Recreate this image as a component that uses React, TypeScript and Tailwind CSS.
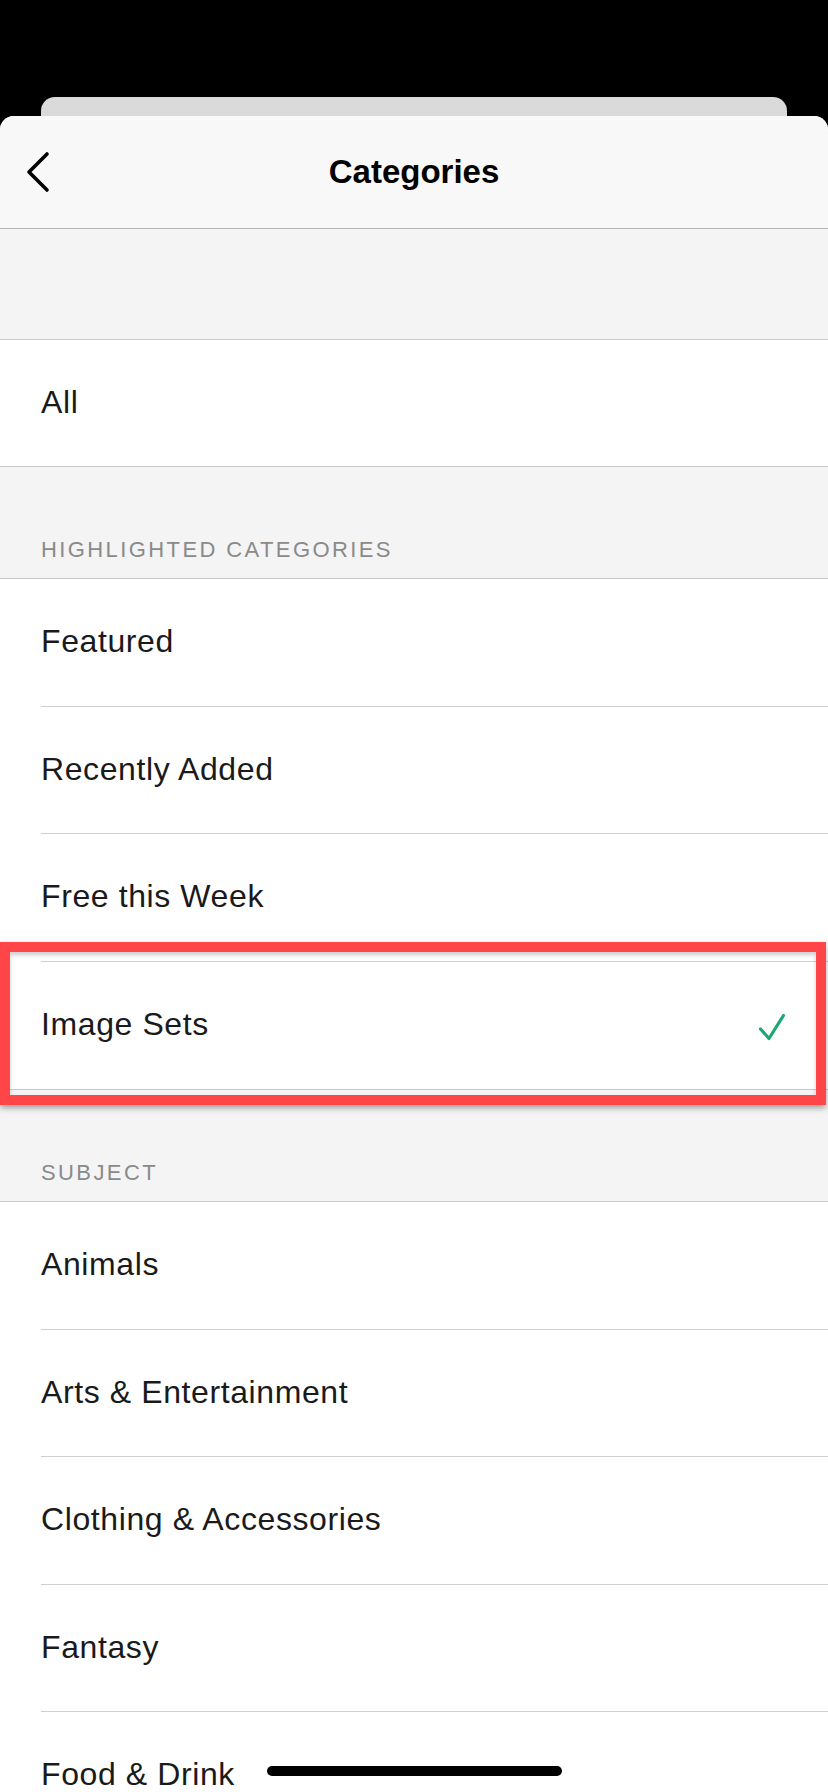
import React from 'react'

const highlighted = ['Featured', 'Recently Added', 'Free this Week', 'Image Sets']
const subjects = ['Animals', 'Arts & Entertainment', 'Clothing & Accessories', 'Fantasy', 'Food & Drink']

function Check() {
  return (
    <svg width="30" height="30" viewBox="0 0 30 30" fill="none" className="mt-[6px]">
      <path
        d="M4.5 17 L13 26.5 L27.5 3.5"
        stroke="#1da873"
        strokeWidth="3.2"
        strokeLinecap="round"
        strokeLinejoin="round"
      />
    </svg>
  )
}

function SectionLabel({ children }: { children: React.ReactNode }) {
  return (
    <div className="h-[112px] bg-[#f4f4f4] border-b border-[#c9c9c9] flex items-end pl-[41px] pb-[17px]">
      <span className="text-[22px] leading-none tracking-[2.4px] text-[#8a8a8a]">{children}</span>
    </div>
  )
}

function Row({ label, last, checked }: { label: string; last?: boolean; checked?: boolean }) {
  return (
    <div className="pl-[41px] bg-white">
      <div
        className={`h-[127.5px] flex items-center justify-between pr-[42px] pb-[2px] ${
          last ? '' : 'border-b border-[#cfcfcf]'
        }`}
      >
        <span className="text-[32px] tracking-[0.6px] text-[#1a1a1a]">{label}</span>
        {checked && <Check />}
      </div>
    </div>
  )
}

export default function App() {
  return (
    <div
      className="relative h-[1792px] w-[828px] overflow-hidden bg-black"
      style={{ fontFamily: '"Liberation Sans", Arial, sans-serif' }}
    >
      {/* card behind the sheet */}
      <div className="pt-[97px]">
        <div className="mx-[41px] h-[19px] rounded-t-[14px] bg-[#dadada]" />
      </div>

      {/* sheet */}
      <div className="rounded-t-[14px] overflow-hidden bg-white">
        {/* Header */}
        <div className="h-[113px] bg-[#f8f8f8] border-b border-[#b5b5b5] grid grid-cols-[1fr_auto_1fr] items-center">
          <div className="pl-[25px] flex items-center">
            <svg width="26" height="44" viewBox="0 0 26 44" fill="none">
              <path
                d="M22 4 L4 22 L22 40"
                stroke="#000"
                strokeWidth="3.6"
                strokeLinecap="round"
                strokeLinejoin="round"
              />
            </svg>
          </div>
          <span className="text-[33px] font-bold text-black">Categories</span>
          <div />
        </div>

        <div className="h-[111px] bg-[#f4f4f4] border-b border-[#c9c9c9]" />

        <div className="h-[127px] bg-white border-b border-[#c9c9c9] flex items-center pl-[41px] pb-[2px]">
          <span className="text-[32px] tracking-[0.6px] text-[#1a1a1a]">All</span>
        </div>

        <SectionLabel>HIGHLIGHTED CATEGORIES</SectionLabel>
        <div className="border-b border-[#c9c9c9]">
          {highlighted.map((item, i) => (
            <Row
              key={item}
              label={item}
              last={i === highlighted.length - 1}
              checked={item === 'Image Sets'}
            />
          ))}
        </div>

        <SectionLabel>SUBJECT</SectionLabel>
        <div>
          {subjects.map((item) => (
            <Row key={item} label={item} />
          ))}
        </div>
      </div>

      {/* highlight annotation */}
      <div className="absolute left-0 top-[942px] w-[826px] h-[163px] border-[10px] border-[#ff4548] shadow-[0_3px_6px_rgba(0,0,0,0.35),inset_0_3px_4px_rgba(0,0,0,0.2)]" />

      {/* home indicator */}
      <div className="absolute bottom-[16px] left-[267px] w-[295px] h-[10px] rounded-full bg-black" />
    </div>
  )
}
